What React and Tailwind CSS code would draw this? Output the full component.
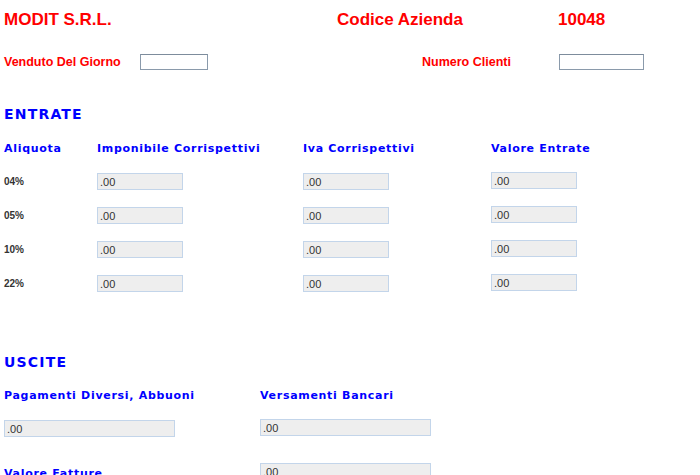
import React from 'react';

const sans = { fontFamily: '"Liberation Sans", Arial, sans-serif' };
const wide = { fontFamily: '"DejaVu Sans", Verdana, sans-serif' };

const Field = ({ w = 'w-[86px]' }) => (
    <input
        readOnly
        value=".00"
        className={`${w} h-[17px] bg-[#eeeeee] border border-[#c3d5ea] px-[2px] text-[11px] text-[#333] outline-none`}
        style={sans}
    />
);

const rates = ['04%', '05%', '10%', '22%'];

export default function App() {
    return (
        <div className="w-[700px] h-[475px] overflow-hidden bg-white pl-[4px]" style={sans}>
            {/* Header */}
            <div className="flex items-center h-[20px] mt-[10px] text-[17px] font-bold text-[#ff0000]">
                <div className="w-[333px]">MODIT S.R.L.</div>
                <div className="w-[221px]">Codice Azienda</div>
                <div>10048</div>
            </div>

            <div className="flex items-center h-[18px] mt-[23px] text-[12.5px] font-bold text-[#ff0000]">
                <div className="w-[136px]">Venduto Del Giorno</div>
                <input className="w-[68px] h-[16px] border border-[#8a9aab] border-t-[#7d8c9c] bg-white outline-none" />
                <div className="w-[214px]" />
                <div className="w-[137px]">Numero Clienti</div>
                <input className="w-[85px] h-[16px] border border-[#8a9aab] border-t-[#7d8c9c] bg-white outline-none" />
            </div>

            {/* Entrate */}
            <div className="mt-[35px] text-[14px] font-bold text-[#0000ff] tracking-[1.2px] h-[16px] leading-[16px]" style={wide}>
                ENTRATE
            </div>
            <div className="flex items-center mt-[19px] h-[16px] text-[11px] font-bold text-[#0000ff] tracking-[0.7px]" style={wide}>
                <div className="w-[93px]">Aliquota</div>
                <div className="w-[206px]">Imponibile Corrispettivi</div>
                <div className="w-[188px]">Iva Corrispettivi</div>
                <div>Valore Entrate</div>
            </div>
            <div className="flex flex-col gap-[17px] mt-[15px]">
                {rates.map((r) => (
                    <div key={r} className="flex items-center h-[17px]">
                        <div className="w-[93px] pt-[1px] text-[10px] font-bold text-[#333]">{r}</div>
                        <div className="w-[206px]"><Field /></div>
                        <div className="w-[188px]"><Field /></div>
                        <Field />
                    </div>
                ))}
            </div>

            {/* Uscite */}
            <div className="mt-[63px] text-[14px] font-bold text-[#0000ff] tracking-[1.2px] h-[16px] leading-[16px]" style={wide}>
                USCITE
            </div>
            <div className="flex items-center mt-[18px] h-[16px] text-[11px] font-bold text-[#0000ff] tracking-[0.7px]" style={wide}>
                <div className="w-[256px]">Pagamenti Diversi, Abbuoni</div>
                <div>Versamenti Bancari</div>
            </div>
            <div className="flex items-center mt-[15px] h-[17px]">
                <div className="w-[256px]"><Field w="w-[171px]" /></div>
                <Field w="w-[171px]" />
            </div>
            <div className="flex items-start mt-[27px] h-[17px]">
                <div className="w-[256px] pt-[3px] text-[11px] font-bold text-[#0000ff] tracking-[0.7px]" style={wide}>Valore Fatture</div>
                <Field w="w-[171px]" />
            </div>
        </div>
    );
}
